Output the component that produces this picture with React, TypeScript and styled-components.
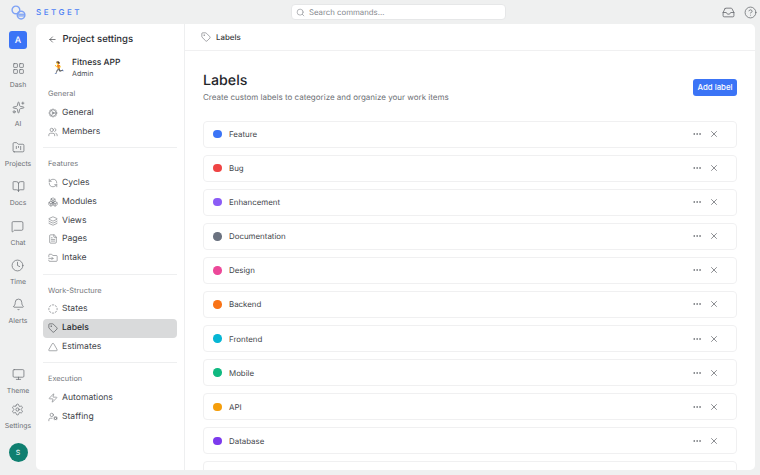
import React from "react";
import styled, { createGlobalStyle } from "styled-components";
import {
  ArrowLeft,
  Bell,
  BookOpen,
  Boxes,
  CircleHelp,
  Clock,
  Ellipsis,
  FileText,
  FolderKanban,
  FolderInput,
  Inbox,
  Layers,
  LayoutGrid,
  MessageSquare,
  Monitor,
  RefreshCcw,
  Search,
  Settings,
  Sparkles,
  Tag,
  Triangle,
  UserCog,
  Users,
  X,
  Zap,
  Cog,
  CircleDashed,
} from "lucide-react";

const GlobalStyle = createGlobalStyle`
  html, body {
    margin: 0;
    height: 475px;
    overflow: hidden;
    background: #eff0f0;
    font-family: Inter, "Liberation Sans", sans-serif;
    color: #26282c;
    text-rendering: geometricPrecision;
  }
  * { box-sizing: border-box; }
`;

const railTop = [
  { label: "Dash", icon: LayoutGrid },
  { label: "AI", icon: Sparkles },
  { label: "Projects", icon: FolderKanban },
  { label: "Docs", icon: BookOpen },
  { label: "Chat", icon: MessageSquare },
  { label: "Time", icon: Clock },
  { label: "Alerts", icon: Bell },
];

const railBottom = [
  { label: "Theme", icon: Monitor },
  { label: "Settings", icon: Settings },
];

const navGroups = [
  {
    title: "General",
    items: [
      { label: "General", icon: Cog },
      { label: "Members", icon: Users },
    ],
  },
  {
    title: "Features",
    items: [
      { label: "Cycles", icon: RefreshCcw },
      { label: "Modules", icon: Boxes },
      { label: "Views", icon: Layers },
      { label: "Pages", icon: FileText },
      { label: "Intake", icon: FolderInput },
    ],
  },
  {
    title: "Work-Structure",
    items: [
      { label: "States", icon: CircleDashed },
      { label: "Labels", icon: Tag, active: true },
      { label: "Estimates", icon: Triangle },
    ],
  },
  {
    title: "Execution",
    items: [
      { label: "Automations", icon: Zap },
      { label: "Staffing", icon: UserCog },
    ],
  },
];

// the last row is cut by the panel edge, only its top border shows
const labels = [
  { name: "Feature", color: "#3b74f6" },
  { name: "Bug", color: "#ef4444" },
  { name: "Enhancement", color: "#8b5cf6" },
  { name: "Documentation", color: "#6b7280" },
  { name: "Design", color: "#ec4899" },
  { name: "Backend", color: "#f97316" },
  { name: "Frontend", color: "#06b6d4" },
  { name: "Mobile", color: "#10b981" },
  { name: "API", color: "#f59e0b" },
  { name: "Database", color: "#7c3aed" },
  { name: "", color: "#84cc16" },
];

const Page = styled.div`
  height: 475px;
  display: flex;
  flex-direction: column;
`;

const TopBar = styled.header`
  height: 24px;
  flex: none;
  display: grid;
  grid-template-columns: 280px 215px 1fr;
  align-items: center;
  padding: 0 3px 0 11px;
`;

const Brand = styled.div`
  display: flex;
  align-items: center;
  gap: 10px;
`;

const BrandName = styled.span`
  font-size: 8px;
  font-weight: 500;
  letter-spacing: 2.5px;
  color: #4d7ff5;
`;

const SearchBox = styled.div`
  height: 16px;
  background: #fff;
  border: 1px solid #e6e7e8;
  border-radius: 4px;
  display: flex;
  align-items: center;
  gap: 4px;
  padding: 0 4px;
  font-size: 7.8px;
  color: #85888d;
`;

const TopActions = styled.div`
  display: flex;
  justify-content: flex-end;
  align-items: center;
  gap: 9px;
  color: #65686d;
`;

const Body = styled.div`
  flex: 1;
  min-height: 0;
  display: flex;
  padding-right: 5px;
  padding-bottom: 5px;
`;

const Rail = styled.nav`
  width: 36px;
  flex: none;
  display: flex;
  flex-direction: column;
  align-items: center;
  padding-top: 7px;
`;

const WorkspaceButton = styled.div`
  width: 18px;
  height: 18px;
  border-radius: 3px;
  background: #3b74f6;
  color: #fff;
  font-size: 9px;
  font-weight: 500;
  display: flex;
  align-items: center;
  justify-content: center;
  margin-bottom: 13px;
`;

const RailItem = styled.div`
  height: 39.4px;
  display: flex;
  flex-direction: column;
  align-items: center;
  gap: 5px;
  color: #6d7075;

  span {
    font-size: 6.9px;
    line-height: 9px;
    color: #6b6e73;
  }
`;

const RailSpacer = styled.div`
  flex: 1;
`;

const RailBottomItem = styled(RailItem)`
  height: 35px;
`;

const Avatar = styled.div`
  width: 19px;
  height: 19px;
  border-radius: 50%;
  background: #0f7f70;
  color: #fff;
  font-size: 7px;
  display: flex;
  align-items: center;
  justify-content: center;
  margin: 5px 0 8px;
`;

const Panel = styled.main`
  flex: 1;
  min-width: 0;
  display: flex;
  background: #fff;
  border-radius: 5px;
  overflow: hidden;
`;

const Sidebar = styled.aside`
  width: 149px;
  flex: none;
  border-right: 1px solid #eeeff0;
  padding: 8px 7px 0;
`;

const SidebarTitle = styled.div`
  height: 15px;
  display: flex;
  align-items: center;
  gap: 5.5px;
  padding-left: 5px;
  font-size: 9.5px;
  font-weight: 500;
  color: #2a2c30;
`;

const ProjectCard = styled.div`
  display: flex;
  align-items: center;
  gap: 8px;
  padding: 7px 0 0 8px;
  height: 34px;
`;

const ProjectEmoji = styled.span`
  font-size: 12px;
  width: 13px;
  text-align: center;
`;

const ProjectName = styled.div`
  font-size: 8.5px;
  font-weight: 500;
  line-height: 12px;
  color: #2a2c30;
`;

const ProjectRole = styled.div`
  font-size: 7.1px;
  line-height: 10px;
  color: #4d5055;
`;

const NavSection = styled.section`
  padding-top: 7px;
  padding-bottom: 6px;
  & + & {
    border-top: 1px solid #eeeff0;
    padding-top: 10px;
  }
`;

const NavTitle = styled.div`
  font-size: 7.4px;
  line-height: 12px;
  padding-left: 5px;
  margin-bottom: 3.5px;
  color: #74777c;
`;

const NavItem = styled.div<{ $active?: boolean }>`
  height: 18.8px;
  display: flex;
  align-items: center;
  gap: 4px;
  padding-left: 5px;
  border-radius: 4px;
  font-size: 8.6px;
  font-weight: ${(p) => (p.$active ? 500 : 400)};
  color: ${(p) => (p.$active ? "#2a2c30" : "#43464b")};
  background: ${(p) => (p.$active ? "#d9dadb" : "transparent")};

  svg {
    color: ${(p) => (p.$active ? "#43464b" : "#75787d")};
    flex: none;
  }
`;

const Content = styled.div`
  flex: 1;
  min-width: 0;
  display: flex;
  flex-direction: column;
`;

const Crumb = styled.div`
  height: 27px;
  flex: none;
  display: flex;
  align-items: center;
  gap: 5px;
  padding-left: 16px;
  border-bottom: 1px solid #f0f0f1;
  font-size: 7.9px;
  font-weight: 500;
  color: #3a3c40;

  svg {
    color: #65686d;
  }
`;

const Scroll = styled.div`
  flex: 1;
  min-height: 0;
  overflow: hidden;
  padding: 20px 18px 0;
`;

const PageHead = styled.div`
  display: flex;
  justify-content: space-between;
  align-items: center;
  margin-bottom: 17.5px;
`;

const PageTitle = styled.h1`
  margin: 0;
  font-size: 14.2px;
  line-height: 20px;
  font-weight: 500;
  color: #24262a;
`;

const PageSub = styled.p`
  margin: 0;
  font-size: 8px;
  line-height: 12px;
  color: #6d7075;
`;

const AddButton = styled.button`
  border: none;
  height: 17px;
  width: 44px;
  padding: 0;
  border-radius: 3px;
  background: #3b74f6;
  color: #fff;
  font: 500 7.8px Inter, "Liberation Sans", sans-serif;
`;

const LabelList = styled.div`
  display: flex;
  flex-direction: column;
  gap: 7.1px;
`;

const LabelRow = styled.div`
  height: 27px;
  flex: none;
  display: flex;
  align-items: center;
  padding: 0 17px 0 9px;
  border: 1px solid #f0f0f1;
  border-radius: 4px;
`;

const Dot = styled.span<{ $color: string }>`
  width: 8.5px;
  height: 8.5px;
  border-radius: 50%;
  background: ${(p) => p.$color};
  margin-right: 7.5px;
`;

const LabelName = styled.span`
  flex: 1;
  font-size: 7.9px;
  color: #43464b;
`;

const RowActions = styled.div`
  display: flex;
  align-items: center;
  gap: 7px;
  color: #55585d;
`;

const Logo = () => (
  <svg width="15" height="15" viewBox="0 0 14 14" fill="none" stroke="#7ea2f5" strokeWidth="1.3">
    <circle cx="4.6" cy="4.6" r="3.6" />
    <circle cx="9.4" cy="9.4" r="3.6" />
    <path d="M6.6 8.6h6M6.6 10.2h6" stroke="#5d8bf4" strokeWidth="0.9" />
  </svg>
);

export default function App() {
  return (
    <Page>
      <GlobalStyle />
      <TopBar>
        <Brand>
          <Logo />
          <BrandName>SETGET</BrandName>
        </Brand>
        <SearchBox>
          <Search size={9} strokeWidth={1.6} />
          Search commands...
        </SearchBox>
        <TopActions>
          <Inbox size={13} strokeWidth={1.5} />
          <CircleHelp size={13} strokeWidth={1.4} />
        </TopActions>
      </TopBar>
      <Body>
        <Rail>
          <WorkspaceButton>A</WorkspaceButton>
          {railTop.map((item) => (
            <RailItem key={item.label}>
              <item.icon size={13} strokeWidth={1.4} />
              <span>{item.label}</span>
            </RailItem>
          ))}
          <RailSpacer />
          {railBottom.map((item) => (
            <RailBottomItem key={item.label}>
              <item.icon size={13} strokeWidth={1.4} />
              <span>{item.label}</span>
            </RailBottomItem>
          ))}
          <Avatar>S</Avatar>
        </Rail>
        <Panel>
          <Sidebar>
            <SidebarTitle>
              <ArrowLeft size={9} strokeWidth={1.6} />
              Project settings
            </SidebarTitle>
            <ProjectCard>
              <ProjectEmoji>🏃</ProjectEmoji>
              <div>
                <ProjectName>Fitness APP</ProjectName>
                <ProjectRole>Admin</ProjectRole>
              </div>
            </ProjectCard>
            {navGroups.map((group) => (
              <NavSection key={group.title}>
                <NavTitle>{group.title}</NavTitle>
                {group.items.map((item) => (
                  <NavItem key={item.label} $active={"active" in item && item.active}>
                    <item.icon size={10} strokeWidth={1.5} />
                    {item.label}
                  </NavItem>
                ))}
              </NavSection>
            ))}
          </Sidebar>
          <Content>
            <Crumb>
              <Tag size={10} strokeWidth={1.4} />
              Labels
            </Crumb>
            <Scroll>
              <PageHead>
                <div>
                  <PageTitle>Labels</PageTitle>
                  <PageSub>Create custom labels to categorize and organize your work items</PageSub>
                </div>
                <AddButton>Add label</AddButton>
              </PageHead>
              <LabelList>
                {labels.map((label) => (
                  <LabelRow key={label.color}>
                    <Dot $color={label.color} />
                    <LabelName>{label.name}</LabelName>
                    <RowActions>
                      <Ellipsis size={10} strokeWidth={1.6} />
                      <X size={10} strokeWidth={1.6} />
                    </RowActions>
                  </LabelRow>
                ))}
              </LabelList>
            </Scroll>
          </Content>
        </Panel>
      </Body>
    </Page>
  );
}
